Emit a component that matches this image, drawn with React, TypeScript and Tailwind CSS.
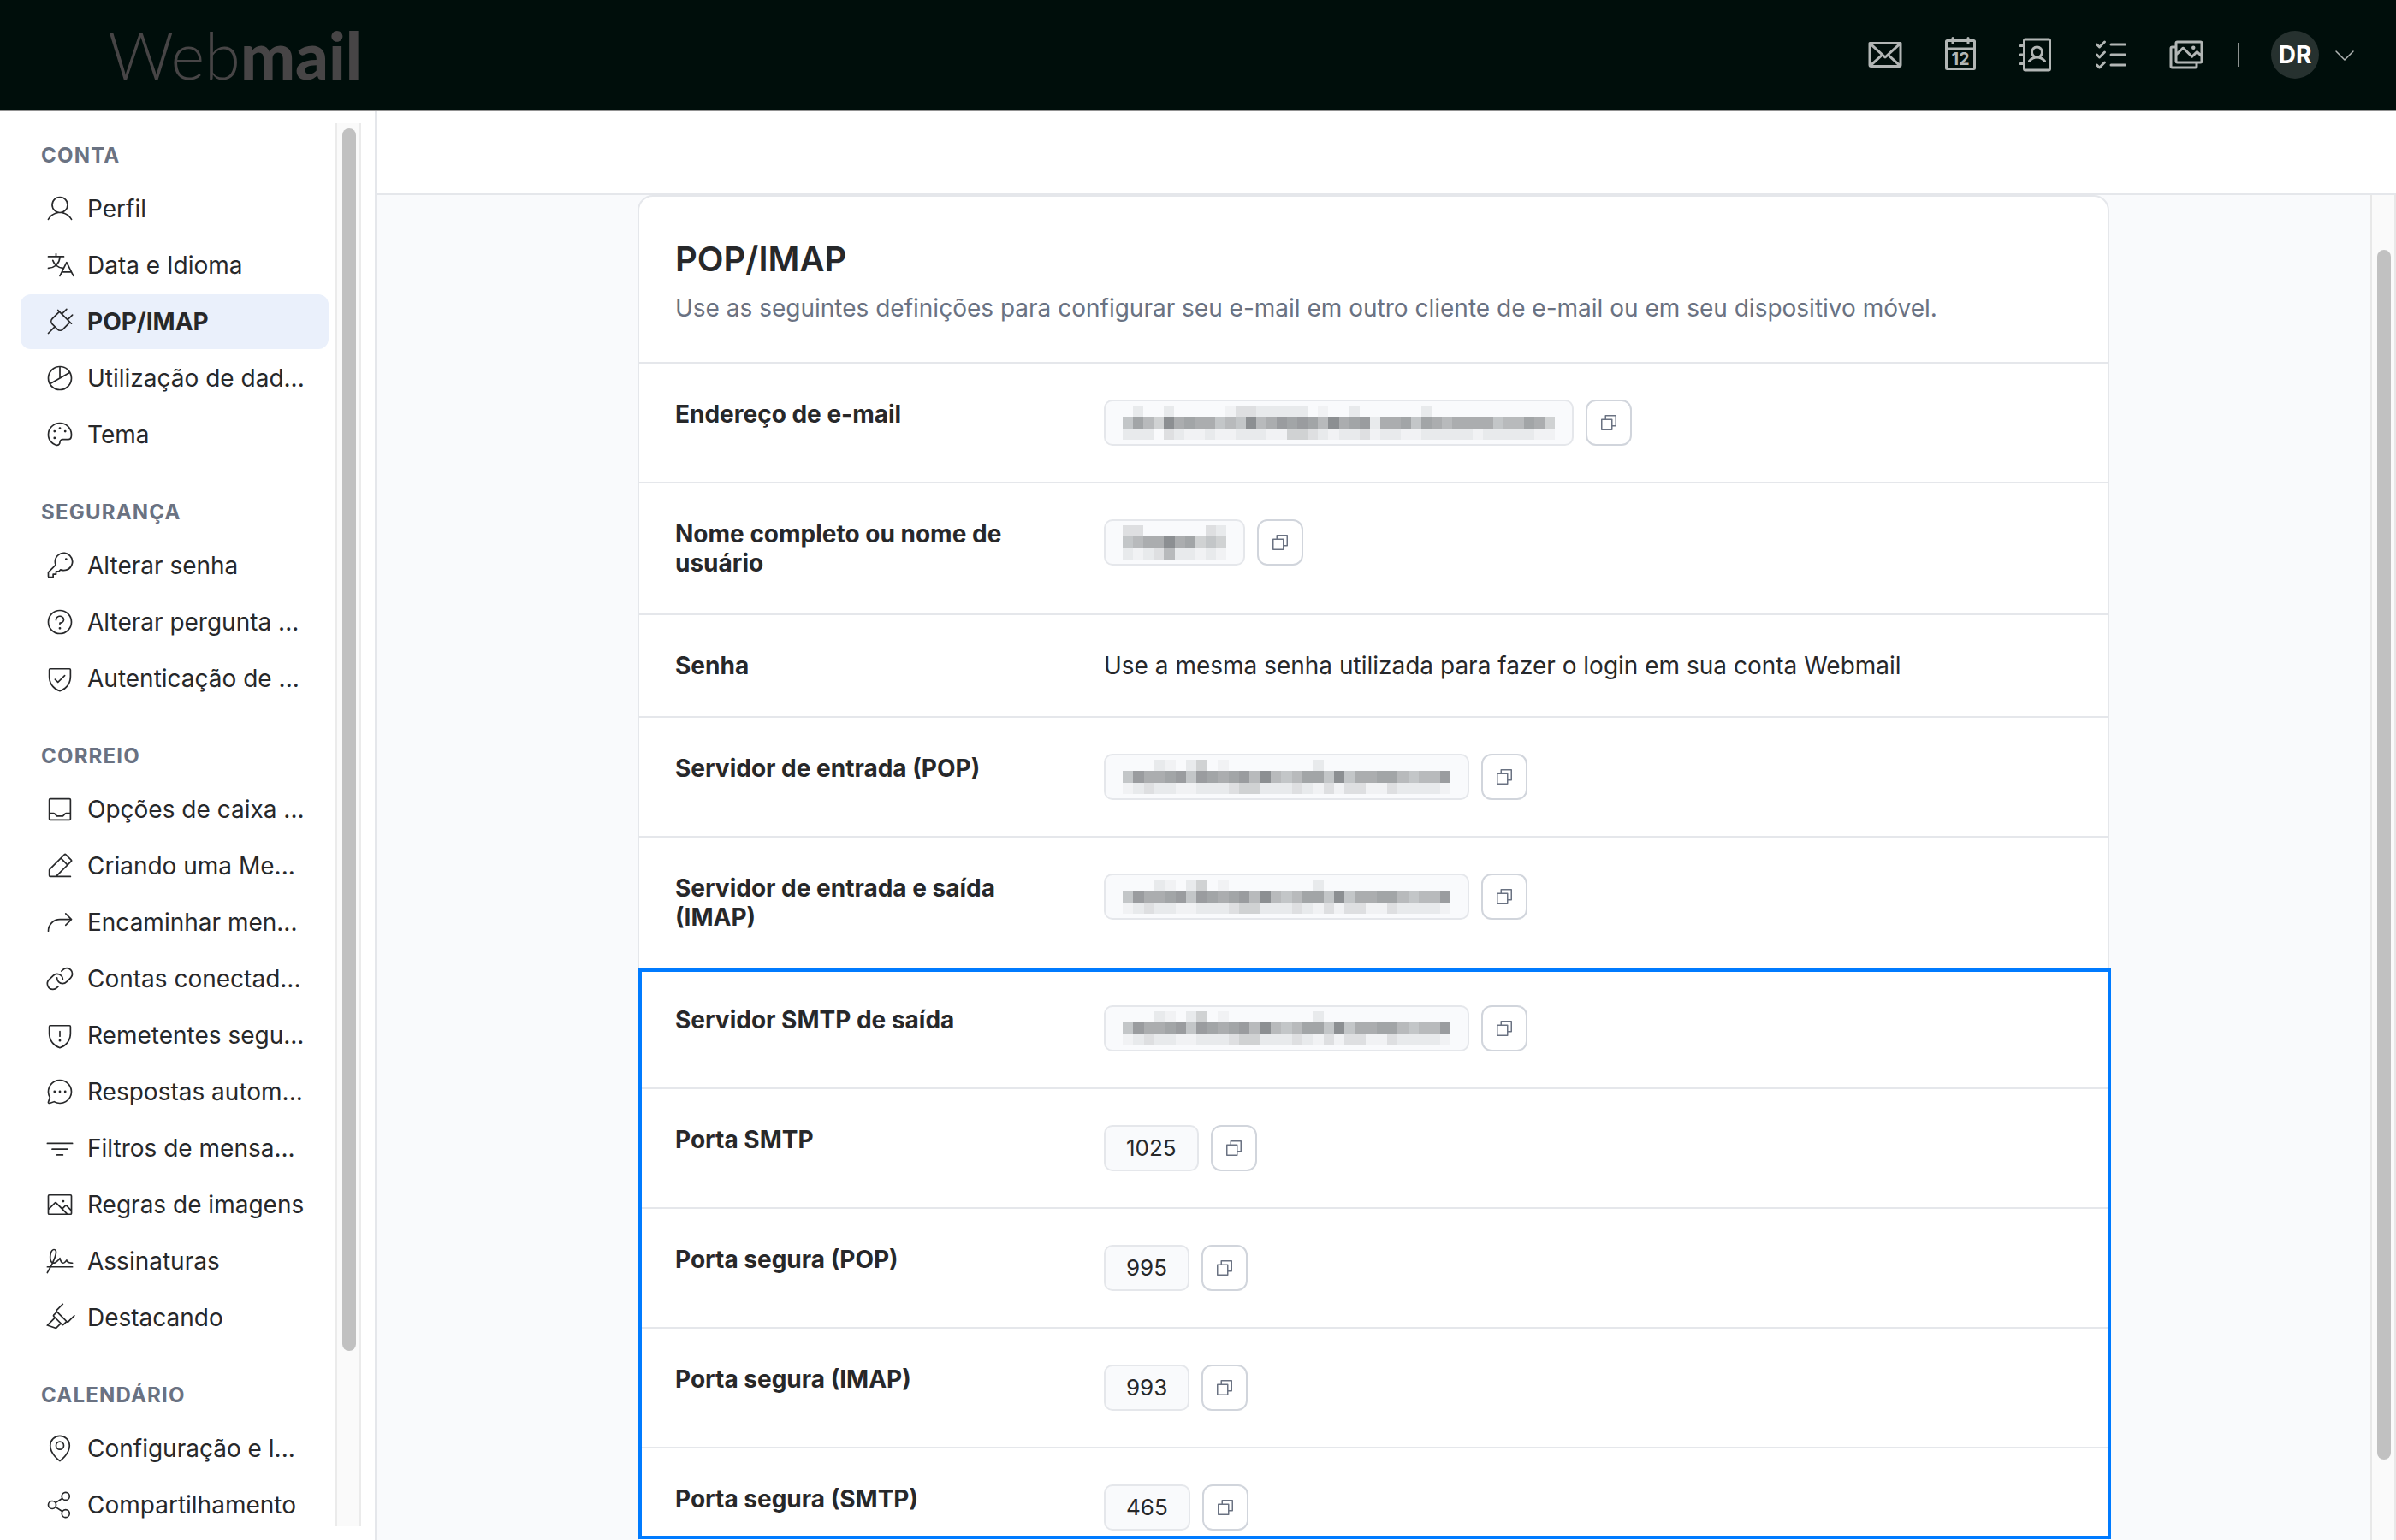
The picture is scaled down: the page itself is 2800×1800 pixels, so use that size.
import type { IconType } from "react-icons";
import {
  PiAddressBook,
  PiArrowBendUpRightLight,
  PiCaretDownLight,
  PiChartPieLight,
  PiChatCircleDotsLight,
  PiCopy,
  PiEnvelope,
  PiFunnelSimpleLight,
  PiHighlighterLight,
  PiImageLight,
  PiImages,
  PiKeyLight,
  PiLinkLight,
  PiListChecks,
  PiMapPinLight,
  PiPaletteLight,
  PiPencilSimpleLineLight,
  PiPlugLight,
  PiQuestionLight,
  PiShareNetworkLight,
  PiShieldCheckLight,
  PiShieldWarningLight,
  PiSignatureLight,
  PiTranslateLight,
  PiTrayLight,
  PiUserLight,
} from "react-icons/pi";

type NavItem = { label: string; icon: IconType; active?: boolean };
type NavSection = { title: string; items: NavItem[] };

const SECTIONS: NavSection[] = [
  {
    title: "CONTA",
    items: [
      { label: "Perfil", icon: PiUserLight },
      { label: "Data e Idioma", icon: PiTranslateLight },
      { label: "POP/IMAP", icon: PiPlugLight, active: true },
      { label: "Utilização de dad...", icon: PiChartPieLight },
      { label: "Tema", icon: PiPaletteLight },
    ],
  },
  {
    title: "SEGURANÇA",
    items: [
      { label: "Alterar senha", icon: PiKeyLight },
      { label: "Alterar pergunta ...", icon: PiQuestionLight },
      { label: "Autenticação de ...", icon: PiShieldCheckLight },
    ],
  },
  {
    title: "CORREIO",
    items: [
      { label: "Opções de caixa ...", icon: PiTrayLight },
      { label: "Criando uma Me...", icon: PiPencilSimpleLineLight },
      { label: "Encaminhar men...", icon: PiArrowBendUpRightLight },
      { label: "Contas conectad...", icon: PiLinkLight },
      { label: "Remetentes segu...", icon: PiShieldWarningLight },
      { label: "Respostas autom...", icon: PiChatCircleDotsLight },
      { label: "Filtros de mensa...", icon: PiFunnelSimpleLight },
      { label: "Regras de imagens", icon: PiImageLight },
      { label: "Assinaturas", icon: PiSignatureLight },
      { label: "Destacando", icon: PiHighlighterLight },
    ],
  },
  {
    title: "CALENDÁRIO",
    items: [
      { label: "Configuração e l...", icon: PiMapPinLight },
      { label: "Compartilhamento", icon: PiShareNetworkLight },
    ],
  },
];

// Redacted values: one letter per block, "a" is the lightest grey.
const SHADES: Record<string, string> = {
  a: "#f1f2f4",
  b: "#e8eaec",
  c: "#dedfe1",
  d: "#d0d2d3",
  e: "#c3c6c8",
  f: "#b8babc",
  g: "#abadaf",
  h: "#a2a5a7",
  i: "#9a9c9f",
  j: "#8c8f92",
};

type Mask = { width: number; rows: string[] };

const EMAIL_MASK: Mask = {
  width: 505,
  rows: [
    ".b..b.....accbbbbb.a..b......b............",
    "ehfdjghggefejfgihihfjghibgghehgfggggeffhgd",
    "bbb.cbaabaabbbaaddcbabbcabbaabbbbbabbbbbaa",
  ],
};

const NAME_MASK: Mask = {
  width: 121,
  rows: ["cc......cb", "efggjghded", "babcfbbaba"],
};

const SERVER_MASK: Mask = {
  width: 383,
  rows: [
    "...ba.bd.a........b............",
    "eigghieihghifjfefhhejegghhfeffi",
    "abcbbaabbbcddbbbcbacaccaacbbbba",
  ],
};

export default function App() {
  return (
    <div className="flex h-screen flex-col overflow-hidden bg-white font-['Inter',sans-serif] text-[28px] leading-[34px] text-[#27282a]">
      <TopBar />
      <div className="flex min-h-0 flex-1">
        <Sidebar />
        <main className="flex min-w-0 flex-1 flex-col">
          <div className="h-[98px] shrink-0 border-b-2 border-gray-200" />
          <div className="flex min-h-0 flex-1 bg-[#f9fafc]">
            <div className="min-w-0 flex-1 overflow-hidden">
              <SettingsCard />
            </div>
            <div className="w-[30px] shrink-0 border-x-2 border-[#e8e8e8] bg-[#fafafa] px-1.5 pt-16">
              <div className="h-[1414px] w-4 rounded-full bg-[#c1c1c1]" />
            </div>
          </div>
        </main>
      </div>
    </div>
  );
}

function TopBar() {
  return (
    <header className="flex h-[130px] shrink-0 items-center justify-between border-b-2 border-[#929292] bg-[#000e0b] pr-11 pl-[126px]">
      <div className="font-['Lato',sans-serif] text-[76px] leading-none text-[#474546]">
        <span className="font-light">Web</span>
        <span className="font-black">mail</span>
      </div>
      <div className="flex items-center text-[#b2b6b5]">
        <nav className="flex gap-10">
          <a href="#mail" aria-label="E-mail">
            <PiEnvelope className="size-12" />
          </a>
          <a href="#calendar" aria-label="Calendário">
            <CalendarIcon />
          </a>
          <a href="#contacts" aria-label="Contatos">
            <PiAddressBook className="size-12" />
          </a>
          <a href="#tasks" aria-label="Tarefas">
            <PiListChecks className="size-12" />
          </a>
          <a href="#files" aria-label="Arquivos">
            <PiImages className="size-12" />
          </a>
        </nav>
        <div className="mr-[37px] ml-9 h-7 w-0.5 bg-[#8d9291]" />
        <button type="button" className="flex items-center gap-3.5">
          <span className="flex size-14 items-center justify-center rounded-full bg-[#26312f] font-bold text-white">
            DR
          </span>
          <PiCaretDownLight className="size-8" />
        </button>
      </div>
    </header>
  );
}

/** Calendar page with the day number on it. */
function CalendarIcon() {
  return (
    <svg
      viewBox="0 0 48 48"
      className="size-12"
      fill="none"
      stroke="currentColor"
      strokeWidth="3"
      strokeLinecap="round"
      strokeLinejoin="round"
    >
      <rect x="7.5" y="7.5" width="33" height="33" rx="1" />
      <path d="M7.5 17h33M15 4.500v6M33 4.500v6" />
      <text
        x="24"
        y="36"
        textAnchor="middle"
        fill="currentColor"
        stroke="none"
        fontSize="20"
        fontWeight="700"
      >
        12
      </text>
    </svg>
  );
}

function Sidebar() {
  return (
    <aside className="flex w-[440px] shrink-0 items-stretch border-r-2 border-gray-200 pt-3.5 pr-4 pb-4 pl-6">
      <nav className="mr-2 flex min-w-0 flex-1 flex-col gap-[45px] overflow-hidden pt-6">
        {SECTIONS.map((section) => (
          <div key={section.title}>
            <h2 className="mb-4 pl-6 text-2xl leading-7 font-bold tracking-wider text-gray-500">
              {section.title}
            </h2>
            <ul className="flex flex-col gap-0.5">
              {section.items.map((item) => (
                <SidebarLink key={item.label} item={item} />
              ))}
            </ul>
          </div>
        ))}
      </nav>
      <div className="w-[30px] shrink-0 border-x-2 border-[#ebebeb] bg-[#fafafa] px-1.5 pt-1.5">
        <div className="h-[1429px] w-4 rounded-full bg-[#c1c1c1]" />
      </div>
    </aside>
  );
}

function SidebarLink({ item }: { item: NavItem }) {
  const Icon = item.icon;
  return (
    <li>
      <a
        href="#"
        className={`flex h-16 items-center gap-3.5 rounded-xl pl-7 whitespace-nowrap ${
          item.active ? "bg-[#eaf0fb] font-bold" : ""
        }`}
      >
        <Icon className="size-9 shrink-0" />
        {item.label}
      </a>
    </li>
  );
}

function SettingsCard() {
  return (
    <section className="mx-auto max-w-[1720px] rounded-t-[18px] border-2 border-gray-200 bg-white">
      <header className="border-b-2 border-gray-200 px-[42px] pt-[49px] pb-[46px]">
        <h1 className="text-[40px] leading-12 font-semibold">POP/IMAP</h1>
        <p className="mt-4 text-gray-500">
          Use as seguintes definições para configurar seu e-mail em outro
          cliente de e-mail ou em seu dispositivo móvel.
        </p>
      </header>
      <dl>
        <Row label="Endereço de e-mail" mask={EMAIL_MASK} />
        <Row label="Nome completo ou nome de usuário" mask={NAME_MASK} />
        <Row
          label="Senha"
          text="Use a mesma senha utilizada para fazer o login em sua conta Webmail"
        />
        <Row label="Servidor de entrada (POP)" mask={SERVER_MASK} />
        <Row label="Servidor de entrada e saída (IMAP)" mask={SERVER_MASK} />
      </dl>
      <div className="relative">
        <dl>
          <Row label="Servidor SMTP de saída" mask={SERVER_MASK} />
          <Row label="Porta SMTP" value="1025" />
          <Row label="Porta segura (POP)" value="995" />
          <Row label="Porta segura (IMAP)" value="993" />
          <Row label="Porta segura (SMTP)" value="465" />
        </dl>
        {/* Outline round the outgoing mail settings */}
        <div className="pointer-events-none absolute -top-px -right-1 bottom-[34px] -left-px border-4 border-[#007bff]" />
      </div>
    </section>
  );
}

type RowProps = { label: string; value?: string; text?: string; mask?: Mask };

function Row({ label, value, text, mask }: RowProps) {
  return (
    <div className="flex border-b-2 border-gray-200 px-[42px] py-[42px]">
      <dt className="w-[501px] shrink-0 pr-24 font-bold">{label}</dt>
      <dd className="flex gap-3.5">
        {text ?? (
          <>
            <span
              className={`flex h-[54px] items-center rounded-[10px] border-2 border-gray-200 bg-[#f9fafc] text-[26px] ${
                mask ? "px-5" : "px-6"
              }`}
            >
              {mask ? <Redacted mask={mask} /> : value}
            </span>
            <button
              type="button"
              aria-label="Copiar"
              className="flex size-[54px] items-center justify-center rounded-xl border-2 border-gray-300 bg-white text-gray-500"
            >
              <PiCopy className="size-6" />
            </button>
          </>
        )}
      </dd>
    </div>
  );
}

/** Pixelated blocks drawn in place of a private value. */
function Redacted({ mask }: { mask: Mask }) {
  return (
    <svg
      aria-hidden="true"
      width={mask.width}
      height={40}
      viewBox={`0 0 ${mask.rows[0].length} 3`}
      preserveAspectRatio="none"
      shapeRendering="crispEdges"
    >
      {mask.rows.flatMap((row, y) =>
        row
          .split("")
          .map((shade, x) =>
            shade === "." ? null : (
              <rect
                key={`${x}-${y}`}
                x={x}
                y={y}
                width="1"
                height="1"
                fill={SHADES[shade]}
              />
            ),
          ),
      )}
    </svg>
  );
}
